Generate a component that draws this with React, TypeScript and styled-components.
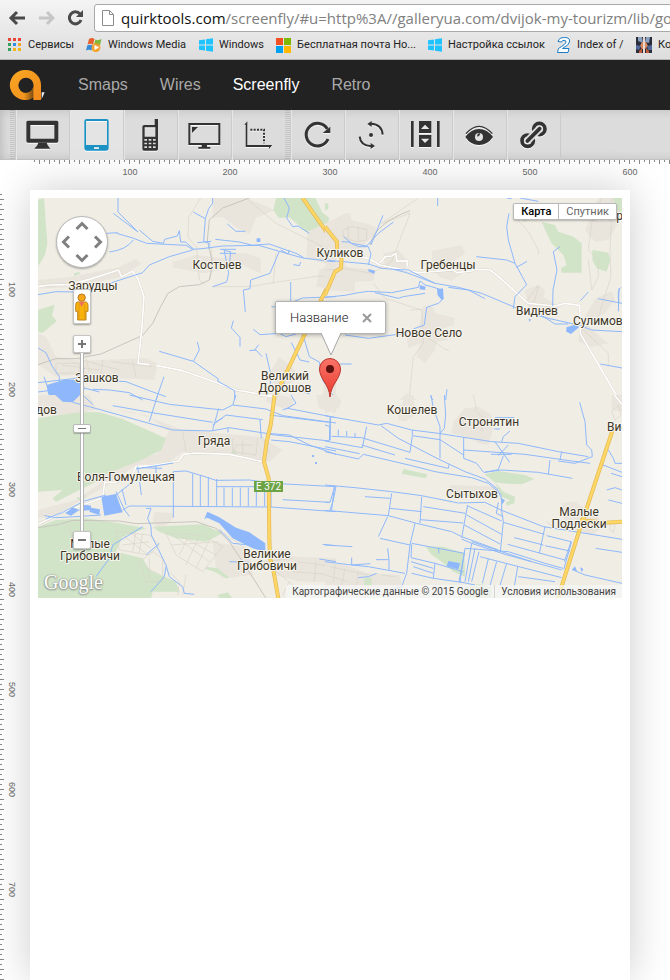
import React from "react";
import styled, { createGlobalStyle, css } from "styled-components";

const Global = createGlobalStyle`
  *, *::before, *::after { box-sizing: border-box; }
  html, body, #root { height: 100%; }
  body { margin: 0; background: #fff; overflow: hidden; font-family: "Liberation Sans", Arial, sans-serif; }
  button, input { font: inherit; margin: 0; padding: 0; border: 0; background: none; }
  ul { margin: 0; padding: 0; list-style: none; }
`;

const Shell = styled.div`
  display: flex;
  flex-direction: column;
  min-height: 100%;
  overflow: hidden;
`;

/* ---------- browser chrome ---------- */

const Chrome = styled.div`
  flex: none;
  height: 60px;
  background: linear-gradient(#f4f4f4, #dedede 56px);
  border-bottom: 1px solid #b4b4b4;
  overflow: hidden;
`;

const AddressRow = styled.div`
  display: flex;
  align-items: center;
  height: 35px;
  padding-left: 8px;
`;

const ChromeButton = styled.button<{ $w: number }>`
  display: block;
  flex: none;
  width: ${(p) => p.$w}px;
  height: 20px;
  svg { display: block; }
`;

const Omnibox = styled.div`
  flex: 1 0 auto;
  display: flex;
  align-items: center;
  height: 28px;
  padding-left: 7px;
  gap: 7px;
  background: #fff;
  border: 1px solid #a9a9a9;
  border-radius: 3px;
`;

const Url = styled.a`
  font: 15px/24px "Open Sans", "Noto Sans", sans-serif;
  color: #808080;
  text-decoration: none;
  white-space: nowrap;
  b { font-weight: 400; color: #111; }
`;

const Bookmarks = styled.nav`
  display: flex;
  align-items: center;
  height: 20px;
  padding-left: 8px;
  gap: 12px;
`;

const Bookmark = styled.a<{ $w: number }>`
  flex: none;
  display: flex;
  align-items: center;
  gap: 6px;
  min-width: ${(p) => p.$w}px;
  font: 11px/18px Roboto, sans-serif;
  color: #222;
  text-decoration: none;
  white-space: nowrap;
  svg { flex: none; }
`;

/* ---------- site navigation and tools ---------- */

const SiteNav = styled.nav`
  flex: none;
  display: flex;
  align-items: center;
  height: 50px;
  padding-left: 9px;
  background: #222;
`;

const NavLink = styled.a<{ $active?: boolean }>`
  margin-left: 32px;
  font-size: 16px;
  line-height: 20px;
  color: ${(p) => (p.$active ? "#fff" : "#a9a9a9")};
  text-decoration: none;
`;

const Toolbar = styled.div`
  flex: none;
  display: flex;
  height: 50px;
  padding-left: 10px;
  background: linear-gradient(#cfcfcf, #dcdcdc 9px, #dcdcdc 41px, #d0d0d0);
  box-shadow: inset 8px 0 8px -6px #bbb, inset 0 -1px 0 #c4c4c4;
`;

const Grip = styled.span`
  width: 5px;
  background: repeating-linear-gradient(rgba(0, 0, 0, 0.1) 0 1px, transparent 1px 2px);
`;

const Tool = styled.button<{ $active?: boolean }>`
  width: 54px;
  height: 50px;
  border-left: 1px solid #cbcbcb;
  box-shadow: inset 1px 0 0 #e6e6e6;
  color: ${(p) => (p.$active ? "#1c92c4" : "#333")};
  ${(p) => p.$active && css`background: #e4e4e4;`}
  svg {
    display: block;
    width: 54px;
    height: 50px;
    filter: drop-shadow(0 1px 0 rgba(255, 255, 255, 0.8));
  }
`;

const ToolEnd = styled.span`
  width: 1px;
  background: #cbcbcb;
`;

/* ---------- rulers and viewport ---------- */

const rulerText = css`
  font-size: 9px;
  line-height: 10px;
  color: #666;
`;

const TopRuler = styled.div`
  flex: none;
  position: relative;
  z-index: 1;
  height: 30px;
  margin-left: 30px;
  background:
    linear-gradient(90deg, transparent 9px, #888 9px) 0 0 / 10px 4px repeat-x,
    linear-gradient(90deg, transparent 4px, #888 4px, #888 5px, transparent 5px) 0 0 / 10px 2px repeat-x;
`;

const TopMarks = styled.ul`
  ${rulerText}
  display: flex;
  padding: 7px 0 0 50px;
  li { flex: 0 0 100px; text-align: center; }
`;

const Workspace = styled.div`
  flex: 1;
  display: flex;
  padding-right: 40px;
`;

const SideRuler = styled.div`
  position: relative;
  z-index: 1;
  flex: 0 0 30px;
  background:
    linear-gradient(transparent 9px, #888 9px) 0 0 / 4px 10px repeat-y,
    linear-gradient(transparent 4px, #888 4px, #888 5px, transparent 5px) 0 0 / 2px 10px repeat-y;
`;

const SideMarks = styled.ul`
  ${rulerText}
  display: flex;
  flex-direction: column;
  padding: 50px 0 0 7px;
  li { flex: 0 0 100px; width: 10px; writing-mode: vertical-rl; text-align: center; }
`;

const Device = styled.main`
  flex: 1;
  padding: 8px;
  background: #fff;
  box-shadow: 0 0 40px rgba(0, 0, 0, 0.2);
`;

/* ---------- map ---------- */

const MapBox = styled.section`
  position: relative;
  height: 400px;
  overflow: hidden;
  background: #f0ede5;
  font-family: Roboto, sans-serif;
`;

const MapArt = styled.svg`
  display: block;
  width: 100%;
  height: 100%;
`;

const MapLabel = styled.text`
  font: 12px Roboto, sans-serif;
  fill: #3c3526;
  stroke: #f7f5f0;
  stroke-width: 2px;
  stroke-linejoin: round;
  paint-order: stroke;
`;

const RoadBadge = styled.text`
  font: 10px Roboto, sans-serif;
  fill: #fff;
`;

const Controls = styled.div`
  position: absolute;
  left: 18px;
  top: 18px;
  width: 52px;
  display: flex;
  flex-direction: column;
  align-items: center;
`;

const PanPad = styled.div`
  display: grid;
  place-items: center;
  grid-template-columns: repeat(3, 16px);
  grid-template-rows: repeat(3, 16px);
  width: 52px;
  height: 52px;
  padding: 1px;
  border: 1px solid #bbb;
  border-radius: 50%;
  background: #fff;
  box-shadow: 0 1px 2px rgba(0, 0, 0, 0.3);
`;

const PanButton = styled.button<{ $col: number; $row: number; $turn: number }>`
  grid-column: ${(p) => p.$col};
  grid-row: ${(p) => p.$row};
  width: 14px;
  height: 14px;
  svg { display: block; transform: rotate(${(p) => p.$turn}deg); }
`;

const MapButton = styled.button<{ $h: number; $gap?: number }>`
  display: grid;
  place-items: center;
  width: 18px;
  height: ${(p) => p.$h}px;
  margin-top: ${(p) => p.$gap ?? 0}px;
  background: #fff;
  border: 1px solid #c4c4c4;
  border-radius: 2px;
  box-shadow: 0 1px 2px rgba(0, 0, 0, 0.35);
`;

const ZoomRange = styled.input`
  appearance: none;
  display: block;
  writing-mode: vertical-lr;
  direction: rtl;
  width: 18px;
  height: 178px;
  background: linear-gradient(#fff, #fff) center / 2px 100% no-repeat,
    linear-gradient(#b5b5b5, #b5b5b5) center / 4px 100% no-repeat;
  &::-webkit-slider-thumb {
    appearance: none;
    width: 18px;
    height: 9px;
    border: 1px solid #b8b8b8;
    border-radius: 2px;
    background: linear-gradient(#777, #777) center / 8px 1px no-repeat, #fff;
    box-shadow: 0 1px 1px rgba(0, 0, 0, 0.25);
  }
`;

const TypeSwitch = styled.div`
  position: absolute;
  top: 5px;
  right: 5px;
  display: flex;
  border: 1px solid #b9b9b9;
  border-radius: 2px;
  background: #fff;
  box-shadow: 0 1px 2px rgba(0, 0, 0, 0.25);
`;

const TypeButton = styled.button<{ $active?: boolean }>`
  padding: 0 7px;
  font: ${(p) => (p.$active ? 500 : 400)} 11px/15px Roboto, sans-serif;
  color: ${(p) => (p.$active ? "#000" : "#666")};
  & + & { border-left: 1px solid #b9b9b9; }
`;

const Bubble = styled.div`
  position: absolute;
  left: calc(50% - 55px);
  top: 103px;
  display: flex;
  align-items: center;
  justify-content: space-between;
  width: 111px;
  height: 33px;
  padding: 0 13px 0 14px;
  border: 1px solid #b3b3b3;
  border-radius: 2px;
  background: #fff;
  box-shadow: 0 1px 4px rgba(0, 0, 0, 0.3);
  font-size: 13px;
  font-weight: 300;
  color: #222;
`;

const CloseButton = styled.button`
  width: 10px;
  height: 10px;
  svg { display: block; }
`;

const Over = styled.svg<{ $top: number; $shift: number }>`
  position: absolute;
  left: calc(50% - ${(p) => p.$shift}px);
  top: ${(p) => p.$top}px;
`;

const Legal = styled.div`
  position: absolute;
  right: 0;
  bottom: 0;
  display: flex;
  height: 13px;
  background: rgba(245, 245, 245, 0.75);
  font-size: 10px;
  line-height: 13px;
  color: #444;
  white-space: nowrap;
  span, a { padding: 0 6px; }
  a { color: inherit; text-decoration: none; border-left: 1px solid #d5d5cc; }
`;

const Brand = styled.a`
  position: absolute;
  left: 6px;
  bottom: 3px;
  font: 20px/26px "Liberation Serif", serif;
  color: #fff;
  text-decoration: none;
  text-shadow: 0 0 2px #777, 0 1px 2px #888;
`;

/* ---------- map data: four tiles drawn at triple scale ---------- */

type Tile = {
  at: [number, number];
  urban: string;
  green: string;
  water: string;
  lanes: string;
  rail: string;
  roads: string;
  rivers: string;
  highway: string;
};

const tiles: Tile[] = [
  {
    at: [-2, -8],
    urban:
      "M532 24L640 24L640 28L716 60L660 84L640 132L600 112L560 80L530 84Z M410 216L480 195L560 205L586 190L630 190L674 205L674 250L620 225L560 240L500 250L410 232Z M6 270L100 262L250 232L300 206L316 222L250 262L120 290L6 296Z M814 120L900 100L900 300L840 290L850 240L880 225L812 205Z M6 430L30 440L60 500L130 512L330 505L365 520L355 570L250 565L110 555L60 560L6 525Z M730 500L800 560L740 590L690 570Z M870 520L900 530V630H860Z",
    green:
      "M6 30L24 24L34 160L28 192L6 230Z M6 360L56 344L48 376L62 394L20 428L6 426Z M720 24L838 24L858 66L880 84L876 98L812 126L760 82L728 84L712 60Z M114 250L130 246L132 252L114 258Z",
    water:
      "M32 585L90 568L140 572L146 598L120 630H58L36 612Z M662 145h11v11h-11z",
    lanes:
      "M60 520H130V550H60Z M78 525L190 540 M120 505L250 540 M225 515L350 530 M150 505L160 545 M200 510L195 555 M290 515L300 560 M494 24L458 82L456 142L482 172L490 270L506 282 M525 170L530 230L520 270 M635 28L720 100L800 140L870 175L900 190 M530 290L640 290L712 278L850 258L900 262 M720 190L712 280",
    rail:
      "M640 24L560 54L520 90L514 150L530 220L520 270L490 284L430 290L396 310L374 350L350 400L320 436L195 492L120 506L60 506L6 524",
    roads:
      "M6 290L40 285L100 284L160 268L248 240L256 260L290 244L306 268L324 320L318 410L306 520L340 524 M360 526L440 542L520 570L600 600L670 612L710 615",
    rivers:
      "M246 24V66L306 126L232 70 M212 130L245 128M242 130L290 144L332 160L450 166L470 178L498 176L560 168L668 166L730 184L800 204L900 216 M310 120L350 154L382 160L386 148L424 138L430 122L434 156L448 156L474 178 M472 66L508 86L518 56L530 40V24 M508 86L503 154L520 160L518 176 M484 158L526 154 M538 148L610 156L650 166L700 162L780 190L802 202 M220 186Q270 180 292 150 M190 290L320 248L340 225L400 200L470 180 M552 178H600 M552 190H600 M564 178L578 250L572 276L530 290 M566 182L584 185L580 230 M730 184L702 250L644 270L642 296L622 300L628 366 M772 224L790 227L794 216 M734 180L756 192L760 180 M744 24L760 54L752 84L770 110L786 108L820 130 M574 102L600 124L628 124 M6 314L60 305L120 306 M120 306L190 296L200 280 M764 276V334 M706 350L730 352L800 324L900 320 M592 392L586 414L612 442V470 M652 418L672 434L730 430L750 440L780 432 M640 482L660 480L678 500 M656 480L668 464 M6 474L30 488L48 528L70 560V590 M6 578L120 565L145 535 M24 560L48 630 M6 606L130 590L190 606 M170 598L220 600L280 608L320 630 M180 570L270 575L340 602L390 620 M370 484L472 514L546 566V574L596 602V630 M472 514L490 480L484 456 M384 560L360 630 M690 490L706 560L700 600 M800 430L820 500L850 516L860 570L900 630 M766 458L792 510L820 516 M740 572L760 606L790 600L820 612",
    highway: "M800 24L900 166 M900 240L855 330L712 630",
  },
  {
    at: [287, -8],
    urban:
      "M24 90L60 70H75L80 90L150 108L155 128L120 160L90 190L30 180L0 160V100Z M322 182L410 166L420 190L390 210L410 250L380 272L345 262L320 232Z M0 225L50 210L65 230L150 240L145 272L90 275L90 305L0 300Z M175 190L220 180L250 215L240 238L180 235Z M600 300L640 285L660 300L655 320L700 350L698 370L640 370L610 350Z M295 348L325 352L330 370L390 385L385 405L340 420L370 450L335 455L330 480L300 518L275 500L285 460L250 475L245 445L280 420Z M812 325L860 304L870 330L840 370L780 400L850 460L800 470L760 455L765 405Z M820 24H891V80L850 150L810 155L780 120Z M222 630L245 610L275 630Z M0 510L30 520L30 610H0Z",
    green:
      "M650 95L690 105L700 125L745 140L770 160V248L710 248L708 235L725 225L715 195L680 160L665 130Z M802 180L850 188L856 210L845 245L815 235L802 210Z M865 24L891 24V66L870 58Z M0 38L10 42V56L0 62Z M590 80L615 88L595 95Z",
    water:
      "M336 298L354 295L356 325L350 330L338 316Z M284 285L302 290L300 300L284 298Z M724 412L755 403L762 412L738 432L724 425Z M130 237L150 242L148 252L130 244Z M611 386L618 388L614 397Z",
    lanes:
      "M53 120L80 110L125 118V150L90 155L55 140Z M70 108V145M100 110V150 M0 240L60 236L140 250L200 215L255 70L170 100L280 24 M255 360L290 358L295 460L265 500L252 630 M145 280L180 325L290 360 M290 430L360 478L372 480 M570 80L610 125L640 180V195 M640 285L600 340M640 290L625 345 M790 210L800 300L820 260V210L790 180L800 100L830 24 M860 24V90L855 180L858 260L820 380L775 420L850 490V530",
    rail: "M255 62Q150 100 135 165",
    roads:
      "M55 190L130 205L165 225L215 235L280 248L385 240L395 248L440 243L450 238L494 240L510 250L610 340L690 348L720 340L764 346L766 430L780 455L830 540L882 630 M165 220L180 200L200 198L212 190L216 214L246 212L247 230",
    rivers:
      "M50 155L70 156L100 170H130L138 192L130 225 M56 140L80 160L125 168L160 130L184 112L206 96 M138 165L174 76 M0 210L130 222L170 235L205 238L245 248L330 280L400 292L470 310L570 352L590 364L670 385L760 405L800 420L891 425 M205 238L250 240L330 280 M0 322L60 316L100 308L130 304L200 308L280 292L285 273L300 285L320 290L345 298 M150 308L220 325L235 320L300 310 M356 325L340 340L305 352L298 405L270 415L240 430L130 445L60 435 M454 200L545 210L570 220L605 284L570 320L565 356 M545 24L560 26M570 220L550 150L545 110L552 70 M575 232L606 214 M338 24V48 M370 292L430 300L480 326 M705 170L685 185L696 240L684 300L683 348 M640 370L690 402H730 M766 332L790 306 M820 326L891 340M880 364L882 295 M882 340Q875 300 888 292 M826 522L891 534 M45 522H80 M316 618L324 630 M362 630L366 598 M585 24L640 34",
    highway: "M0 110L36 155V190L50 195L48 235L30 245L0 315",
  },
  {
    at: [-2, 197],
    urban:
      "M6 0H160L180 40L290 50L400 90L440 105L670 125L740 165L700 200L620 190L590 175L440 170L400 200L300 210L215 270L60 360L6 370V345L120 315L200 260L210 230L310 190L370 175L330 165L330 130L385 130L400 110L330 60L200 40L60 70L6 40Z M355 350L410 355V370L380 405L350 385Z M695 0H730L770 10V35L740 40L690 20Z M840 0H900V55L850 40Z M530 440L640 460L650 540L560 550L540 520Z M700 470L770 485L900 490V560L790 560L720 540Z",
    green:
      "M6 70L130 52L190 52L260 72L390 130L376 165L310 198L215 235L180 260L60 320L50 310L80 285L6 290Z M200 208L250 215L210 230Z M6 395L60 375L150 370L250 385L330 400L260 425L240 470L320 490L340 525L420 560L430 590L350 590L345 610H6Z M350 395L500 388L560 415L510 440L420 430L370 410Z M120 310L150 300L140 320Z M590 165L605 172L600 178L585 174Z M510 515L545 520L580 548L570 550L535 530L510 522Z M545 600L575 592L590 610H550Z",
    water:
      "M58 0H132L110 22L80 20Z M196 305L240 297L260 352L205 362Z M88 355L110 337L130 345L105 362Z M135 328L165 332L165 345L130 348Z M165 338L192 343L190 360L160 350Z M514 350L550 367L600 398L640 412L688 445V470L650 460L590 430L550 385L514 368L505 372Z M828 180h6v6h-6z M837 201h6v6h-6z",
    lanes:
      "M440 110L450 170 M590 130V170L660 180L665 130 M620 140V180 M680 125L700 175 M590 180L600 150H650 M80 375L100 400L110 440L80 470 M240 410L340 420L370 450L340 480L250 465Z M260 420L330 475 M280 412L345 460 M300 412L290 470 M320 415L310 472 M260 450L340 440 M390 415L500 420L560 455L500 530L420 480Z M410 420L520 500 M430 420L540 480 M460 420L430 480 M490 422L450 510 M520 435L480 520 M405 450L550 440 M310 500L350 470L380 490L380 560L330 560Z M320 510L370 540 M340 490V555 M780 500L900 515 M770 530L900 540 M840 500L835 560 M870 505V590 M720 530L760 560L740 600 M760 560L790 590L785 610 M400 530L430 560L425 600 M450 540L440 600 M540 400L600 440L680 500L770 490",
    rail: "M6 398L70 388L110 376L250 378L300 386L480 380L540 400L580 440L620 500L690 610",
    roads:
      "M6 388L80 352L200 308L206 262L240 262L290 238L300 214L350 212L428 198L442 178L480 174L580 178L680 200 M670 0L710 5L690 0",
    rivers:
      "M110 22L160 35L250 60L410 105L525 108L580 98L690 115L760 120L820 150L900 178 M230 32L360 55L530 82 M340 80L365 0 M280 0L400 28L560 45L590 30L600 0 M590 30L690 42L740 62L900 84 M530 105L548 40 M530 90L570 60L680 74 M540 80L560 70M700 60L880 82 M740 44L755 40L900 68 M884 65L880 138L700 118 M576 98V112 M672 75L676 130 M765 0L780 25L750 42 M705 135L760 140L900 168 M300 222L412 204 M305 214L316 300 M318 218L378 220 M360 212V235 M412 368V230L450 228L510 246L540 256L640 255L690 262 M470 236V333 M493 240V333 M517 246V333 M542 252V333 M564 278V333 M589 278V333 M613 278V333 M637 278V333 M661 278V333 M686 278V333 M542 275H690 M260 345L280 333L705 336L900 350 M705 280V336 M710 265L900 275 M740 314L882 322L896 275 M240 290L266 345L280 364 M258 282L270 330 M240 300L310 245 M330 340L345 340L335 370L345 395L346 420L390 510L400 545L440 575L445 595L475 598 M320 395L230 450L220 490L180 545 M390 515L385 545L345 590 M370 445L330 480 M25 362L60 368L120 365L195 360 M30 372L80 352L145 318L210 300 M550 404L590 445L640 450 M860 448L900 452 M850 492L900 500 M580 500L640 502M140 0L170 28",
    highway: "M716 0L704 90L692 140L684 200L698 250L700 430L702 490L712 525L727 610",
  },
  {
    at: [287, 197],
    urban:
      "M0 0H35L50 20L40 40L0 55Z M225 45L240 0H265L270 60L240 80L220 75Z M385 80L420 40L460 35L500 60L505 100L490 150L460 145L440 130L380 115Z M375 270L520 275V310L375 300Z M710 325L750 320L830 375V400L800 420L740 400L720 380Z M860 0H891V50L860 45Z M0 500L60 510L130 535L225 540L230 575L0 575Z",
    green:
      "M478 238L520 228L600 240L628 252L590 268L530 265L510 262Z M510 262L535 290L570 305L568 325L545 332L542 322L556 316L530 305Z M235 222L307 238L302 250L230 236Z M302 455L355 455L418 475L420 545L385 530L350 500L320 480Z M118 550L140 548V575L118 572Z M420 575Q460 560 500 575V610H420Z",
    water:
      "M370 498L405 505L400 523L365 514Z M526 308L540 316L532 328Z M740 525L750 514L756 528Z M765 516L775 522L770 532Z",
    lanes:
      "M15 515L130 540 M0 540L70 560 M30 510L25 560 M60 520L50 570 M100 530L95 570 M170 540L210 545 M860 50L880 30L888 60L870 75Z M850 380L870 390L865 412L855 405L856 385 M450 45L475 70L470 110 M665 380L690 400 M445 0L455 45",
    rail: "",
    roads: "M868 0L891 28",
    rivers:
      "M0 62L160 90L185 85L260 105L340 115L500 140L580 145L700 170L790 185 M0 90L15 95V135 M15 68V135 M20 124L110 128L255 172L262 122L345 134 M40 104V122 M65 108V124 M90 114V128 M125 95L112 158L0 138 M110 150L210 180 M0 155L104 176 M0 170L100 192L115 178L260 212L330 230L440 248L490 265L530 300 M240 190L370 220L372 208 M168 92L220 130L340 192L420 230L480 252L515 280L530 310V348L535 380L526 470 M345 190V95L325 40L318 0 M345 115L358 100L362 60L358 0 M416 127V190L455 205L476 232 M416 165L600 178L740 198L795 205 M345 134L416 180M530 140L535 125L555 108 M508 102H525 M510 140L554 202 M550 150L520 182 M498 178L560 178 M535 182L520 224L478 232 M478 232L530 225L640 232L742 250 M675 195L670 238 M764 22L780 80L785 150L800 165L802 185L750 205L700 198 M710 170L705 195 M262 105L262 120 M510 68H568 M0 270L90 278L200 290L290 302L400 324L480 322L530 346L655 395L738 408L891 433 M28 275L20 345 M33 275L24 320L15 345 M0 322H15 M0 346L190 362L200 295 M195 340L290 350 M120 305L195 310 M290 305L285 385 M295 335L422 355 M188 365L160 425 M190 362L275 385L380 410L410 425L520 465 M285 374L415 384 M428 330L410 428 M428 333L530 378 M425 360L530 418 M418 390L525 447 M535 382L658 418 M520 322L514 355L535 365 M660 395L643 475 M568 428L655 450 M548 448L720 495 M665 422L738 440 M660 452L735 468 M740 440L716 524 M738 440L718 500 M270 385L255 450L245 535 M165 430L255 450 M260 445L418 475 M260 448L258 488L330 505L325 550L260 535 M258 500L325 520 M265 515L325 535 M330 505L415 530 M340 460L342 475 M418 475L402 560L450 570 M420 460L405 560 M440 445L420 560 M450 460L430 560 M462 470L440 560 M420 460L550 470L660 505L714 520 M440 440L530 470L620 500 M410 432L440 445L540 478L710 525 M465 485L710 548 M490 492L472 565 M515 500L495 572 M545 505L525 572 M578 515L568 575 M580 545L690 560 M0 500L80 510L130 515L240 535 M80 488V510L136 506 M188 460L192 495V525 M153 494H190 M100 548L130 545L155 535 M325 550L410 562 M245 535L230 575L210 580 M0 450L82 455 M834 210L891 232 M850 165L865 190L870 205H891 M858 235L891 245 M850 315L891 325 M845 285L870 278L891 285 M812 460L891 472 M745 525L780 540L891 565",
    highway: "M868 90L765 400L705 590L700 610 M765 375L840 383L891 380",
  },
];

type Label = { x: number; y: number; text: string; start?: boolean };
const labels: Label[] = [
  { x: 179, y: 71, text: "Костыев" },
  { x: 302, y: 59, text: "Куликов" },
  { x: 410, y: 71, text: "Гребенцы" },
  { x: 499, y: 117, text: "Виднев" },
  { x: 535, y: 127, text: "Сулимов", start: true },
  { x: 391, y: 139, text: "Новое Село" },
  { x: 558, y: 22, text: "Звертов", start: true },
  { x: 55, y: 92, text: "Зарудцы" },
  { x: 59, y: 184, text: "Зашков" },
  { x: 247, y: 182, text: "Великий" },
  { x: 247, y: 194, text: "Дорошов" },
  { x: 374, y: 216, text: "Кошелев" },
  { x: 451, y: 228, text: "Стронятин" },
  { x: 569, y: 233, text: "Вислобоки", start: true },
  { x: -2, y: 216, text: "дов", start: true },
  { x: 176, y: 247, text: "Гряда" },
  { x: 88, y: 283, text: "Воля-Гомулецкая" },
  { x: 434, y: 300, text: "Сытыхов" },
  { x: 541, y: 318, text: "Малые" },
  { x: 541, y: 330, text: "Подлески" },
  { x: 52, y: 350, text: "Малые" },
  { x: 52, y: 362, text: "Грибовичи" },
  { x: 229, y: 360, text: "Великие" },
  { x: 229, y: 372, text: "Грибовичи" },
];

const Terrain = () => (
  <MapArt viewBox="0 0 584 400" preserveAspectRatio="xMidYMid slice" aria-label="Карта">
    {tiles.map((t, i) => (
      <g key={i} transform={`translate(${t.at[0]} ${t.at[1]}) scale(0.33333)`} fill="none" strokeLinejoin="round">
        <path d={t.urban} fill="#e9e4dc" />
        <path d={t.green} fill="#d1e4c8" />
        <path d={t.lanes} stroke="#dad5c9" strokeWidth="2" />
        <path d={t.rail} stroke="#c8c5be" strokeWidth="3" />
        <path d={t.roads} stroke="#d6d0c4" strokeWidth="7" />
        <path d={t.roads} stroke="#fff" strokeWidth="5" />
        <path d={t.water} fill="#8eb8fb" />
        <path d={t.rivers} stroke="#8eb8fb" strokeWidth="3" />
        <path d={t.highway} stroke="#e2b95a" strokeWidth="12" />
        <path d={t.highway} stroke="#fdd663" strokeWidth="8" />
      </g>
    ))}
    <rect x="216" y="283" width="29" height="11" fill="#6ba345" />
    <RoadBadge x="230.5" y="292" textAnchor="middle">E 372</RoadBadge>
    {labels.map((l, i) => (
      <MapLabel key={i} x={l.x} y={l.y} textAnchor={l.start ? "start" : "middle"}>{l.text}</MapLabel>
    ))}
  </MapArt>
);

/* ---------- icons ---------- */

const WindowsFlag = () => (
  <svg width="14" height="14" viewBox="0 0 14 14" fill="#1fc3ff">
    <path d="M0 2.2L6 1.4V6.5H0ZM7 1.2L14 .3V6.5H7ZM0 7.5H6V12.6L0 11.8ZM7 7.5H14V13.8L7 12.8Z" />
  </svg>
);

const AppsIcon = () => (
  <svg width="14" height="14" viewBox="0 0 14 14">
    {["#ea4335", "#ea4335", "#ea4335", "#34a060", "#2f8ee8", "#f5a623", "#34a060", "#f2b619", "#f2b619"].map((c, i) => (
      <rect key={i} x={(i % 3) * 5} y={Math.floor(i / 3) * 5} width="3" height="3" fill={c} />
    ))}
  </svg>
);

const MediaIcon = () => (
  <svg width="16" height="16" viewBox="0 0 16 16">
    <path d="M3 2Q6 0 8.500 2L7 7.500Q4 6 1.500 7.500Z" fill="#e8612c" />
    <path d="M9.500 2.500Q12 4 15.500 2L14 8Q11 9 8 7.500Z" fill="#7db83a" />
    <path d="M1.200 8.500Q4 7 6.800 8.500L5.500 13.500Q3 12 0 13.500Z" fill="#3a8ad8" />
    <path d="M7.500 8.500Q10 10 13.500 9L12 14.500Q9 15.500 6 13.500Z" fill="#f6c12c" />
    <circle cx="10" cy="10.500" r="4.500" fill="#f59a23" opacity=".8" />
    <path d="M8.500 8L13 10.500L8.500 13Z" fill="#fff" />
  </svg>
);

const MsIcon = () => (
  <svg width="15" height="15" viewBox="0 0 15 15">
    <path d="M0 0H7V7H0Z" fill="#f35022" />
    <path d="M8 0H15V7H8Z" fill="#7eb900" />
    <path d="M0 8H7V15H0Z" fill="#01a3ee" />
    <path d="M8 8H15V15H8Z" fill="#ffb900" />
  </svg>
);

const TwoIcon = () => (
  <svg width="14" height="16" viewBox="0 0 14 16" fill="#fff" stroke="#1c7cc8">
    <path d="M1 4.500Q2 .5 7.500 .5Q13.500 .5 12.500 5Q12 8 5.500 11.500H12L11 15.500H.5L1.500 11.500Q9 7 9 5Q9 3.300 7 3.300Q5.300 3.300 4.500 5Z" />
  </svg>
);

const PhotoIcon = () => (
  <svg width="16" height="16" viewBox="0 0 16 16">
    <path d="M0 0H16V16H0Z" fill="#2b2d3a" />
    <path d="M2 0H6L7 6L2 4ZM10 0H14L13 6L9 5Z" fill="#8ba0c0" />
    <path d="M6 5H10L12 9L9 12H6L4 9Z" fill="#d98a5f" />
    <path d="M7 0H9V16H7Z" fill="#e8d5cc" />
    <path d="M0 8L5 9L3 13L0 12ZM11 9L16 8V13L12 13Z" fill="#53699a" />
    <path d="M3 14L6 11V16H3ZM10 11L13 14V16H10Z" fill="#c25b3a" />
  </svg>
);

const bookmarks = [
  { text: "Сервисы", w: 65, icon: <AppsIcon /> },
  { text: "Windows Media", w: 101, icon: <MediaIcon /> },
  { text: "Windows", w: 65, icon: <WindowsFlag /> },
  { text: "Бесплатная почта Но...", w: 139, icon: <MsIcon /> },
  { text: "Настройка ссылок", w: 114, icon: <WindowsFlag /> },
  { text: "Index of /", w: 67, icon: <TwoIcon /> },
  { text: "Контакты", w: 66, icon: <PhotoIcon /> },
];

const Logo = () => (
  <svg width="37" height="32" viewBox="24 33 111 96">
    <defs>
      <linearGradient id="ring" x1="0" y1="0" x2="1" y2="1">
        <stop offset="0" stopColor="#f7a823" />
        <stop offset="1" stopColor="#f28a1d" />
      </linearGradient>
      <linearGradient id="fold" x1="0" x2="1">
        <stop offset="0" stopColor="#f39a1e" />
        <stop offset="1" stopColor="#7c4a10" />
      </linearGradient>
    </defs>
    <path d="M75 36A45 45 0 0 1 120 81V126H97V118A45 45 0 1 1 75 36ZM75 59A23 23 0 1 0 75 105A23 23 0 1 0 75 59Z" fill="url(#ring)" fillRule="evenodd" />
    <path d="M68 105Q90 108 97 86V118Q84 128 68 125Z" fill="url(#fold)" />
    <path d="M122 103H131L122 123Z" fill="#f1f1f1" />
  </svg>
);

const deviceTools = [
  {
    name: "Desktop",
    art: (
      <svg viewBox="48 156 162 150" fill="currentColor">
        <path fillRule="evenodd" d="M84 188H170Q175 188 175 193V249Q175 254 170 254H84Q79 254 79 249V193Q79 188 84 188ZM91 201V242H163V201Z" />
        <path d="M115 254H140L143 262L151 272H103L112 262Z" />
      </svg>
    ),
  },
  {
    name: "Tablet",
    active: true,
    art: (
      <svg viewBox="210 156 162 150" fill="currentColor">
        <path fillRule="evenodd" d="M260 183H319Q326 183 326 190V271Q326 278 319 278H260Q253 278 253 271V190Q253 183 260 183ZM258 189V261H321V189ZM282 268V273H297V268Z" />
      </svg>
    ),
  },
  {
    name: "Mobile",
    art: (
      <svg viewBox="372 156 162 150" fill="currentColor">
        <path fillRule="evenodd" d="M464 183H474V273Q474 278 469 278H432Q427 278 427 273V207Q427 201 433 201H464ZM434 208V236H466V208Z" />
        <path d="M433 243h8v5h-8zM446 243h8v5h-8zM459 243h8v5h-8zM433 254h8v5h-8zM446 254h8v5h-8zM459 254h8v5h-8zM433 265h8v5h-8zM446 265h8v5h-8zM459 265h8v5h-8z" fill="#dcdcdc" />
      </svg>
    ),
  },
  {
    name: "Television",
    art: (
      <svg viewBox="534 156 162 150" fill="currentColor">
        <path fillRule="evenodd" d="M565 195H661V261H565ZM571 201V255H655V201Z" />
        <path d="M576 207H594L576 225ZM605 261H621V267H631V272H595V267H605Z" />
      </svg>
    ),
  },
  {
    name: "Custom Size",
    art: (
      <svg viewBox="696 156 162 150" fill="currentColor">
        <path d="M733 200L742 190V261H804V261H817L807 273V267H737V200Z" />
        <path d="M751 215H792V256" fill="none" stroke="currentColor" strokeWidth="6" strokeDasharray="6 4" />
      </svg>
    ),
  },
];

const viewTools = [
  {
    name: "Refresh",
    art: (
      <svg viewBox="3 15 162 150">
        <path d="M112 72A34 34 0 1 0 114 102" fill="none" stroke="currentColor" strokeWidth="9" />
        <path d="M121 65V84H98Z" fill="currentColor" />
      </svg>
    ),
  },
  {
    name: "Rotate",
    art: (
      <svg viewBox="165 15 162 150">
        <path d="M243 56Q276 58 278 89M209 95Q211 122 244 124" fill="none" stroke="currentColor" strokeWidth="6" />
        <circle cx="243" cy="90" r="6" fill="currentColor" />
        <path d="M232 57L245 48V66ZM255 123L242 114V132Z" fill="currentColor" />
      </svg>
    ),
  },
  {
    name: "Allow Scrolling",
    art: (
      <svg viewBox="327 15 162 150" fill="currentColor">
        <path d="M363 48H371V126H363ZM441 48H449V126H441ZM387 48H424V84H387ZM387 90H424V126H387Z" />
        <path d="M393 72L405 59L418 72ZM393 101H418L405 114Z" fill="#e8e8e8" />
      </svg>
    ),
  },
  {
    name: "Use Proxy Server",
    art: (
      <svg viewBox="489 15 162 150" fill="currentColor">
        <path d="M526 96Q544 72 567 72Q592 72 609 96Q592 120 567 120Q542 120 526 96Z" />
        <path d="M528 86Q567 42 607 86" fill="none" stroke="currentColor" strokeWidth="4" />
        <circle cx="567" cy="96" r="12" fill="#e2e2e2" />
        <path d="M567 84A12 12 0 0 0 561 94Q567 96 571 86Z" />
      </svg>
    ),
  },
  {
    name: "Share",
    art: (
      <svg viewBox="651 15 162 150" fill="none" stroke="currentColor" strokeLinecap="round">
        <circle cx="748" cy="72" r="17" strokeWidth="11" />
        <circle cx="713" cy="107" r="17" strokeWidth="11" />
        <path d="M716 104L746 74" stroke="#dcdcdc" strokeWidth="22" />
        <path d="M712 108L749 71" strokeWidth="11" />
      </svg>
    ),
  },
];

const Chevron = () => (
  <svg width="14" height="14" viewBox="0 0 14 14" fill="none" stroke="#808080" strokeWidth="3">
    <path d="M1.500 10L7 4.500L12.500 10" />
  </svg>
);

const Pegman = () => (
  <svg width="14" height="28" viewBox="118 307 42 84">
    <path d="M124 334H152Q157 336 157 344V362H151V388H126V362H120V344Q120 336 124 334Z" fill="#f7b20c" stroke="#c08325" strokeWidth="3" />
    <path d="M130 340V384M147 340V384" stroke="#d9931a" strokeWidth="2" />
    <circle cx="138" cy="321" r="11" fill="#f5a81b" stroke="#b5751f" strokeWidth="3" />
    <path d="M130 334H147L138 349Z" fill="#f0705a" />
  </svg>
);

export default function App() {
  return (
    <Shell>
      <Global />
      <Chrome>
        <AddressRow>
          <ChromeButton $w={29} aria-label="Back">
            <svg width="18" height="20" viewBox="0 0 18 20" fill="none" stroke="#4a4a4a" strokeWidth="3">
              <path d="M17 10H4M9 4L3 10L9 16" />
            </svg>
          </ChromeButton>
          <ChromeButton $w={29} aria-label="Forward">
            <svg width="18" height="20" viewBox="0 0 18 20" fill="none" stroke="#c6c6c6" strokeWidth="3">
              <path d="M2 10H15M10 4L16 10L10 16" />
            </svg>
          </ChromeButton>
          <ChromeButton $w={28} aria-label="Reload">
            <svg width="18" height="20" viewBox="0 0 18 20">
              <path d="M14 6A6 6 0 1 0 15 12" fill="none" stroke="#4a4a4a" strokeWidth="3" />
              <path d="M17 2V9H10Z" fill="#4a4a4a" />
            </svg>
          </ChromeButton>
          <Omnibox>
            <svg width="12" height="16" viewBox="0 0 12 16" fill="#fff" stroke="#8c8c8c">
              <path d="M.5 .5H7.500L11.500 4.500V15.500H.5ZM7.500 .5V4.500H11.500" />
            </svg>
            <Url href="#"><b>quirktools.com</b>/screenfly/#u=http%3A//galleryua.com/dvijok-my-tourizm/lib/google</Url>
          </Omnibox>
        </AddressRow>
        <Bookmarks>
          {bookmarks.map((b, i) => (
            <Bookmark key={i} href="#" $w={b.w}>{b.icon}{b.text}</Bookmark>
          ))}
        </Bookmarks>
      </Chrome>

      <SiteNav>
        <Logo />
        <NavLink href="#">Smaps</NavLink>
        <NavLink href="#">Wires</NavLink>
        <NavLink href="#" $active>Screenfly</NavLink>
        <NavLink href="#">Retro</NavLink>
      </SiteNav>

      <Toolbar>
        <Grip />
        {deviceTools.map((t) => (
          <Tool key={t.name} $active={t.active} aria-label={t.name}>{t.art}</Tool>
        ))}
        <Grip />
        {viewTools.map((t) => (
          <Tool key={t.name} aria-label={t.name}>{t.art}</Tool>
        ))}
        <ToolEnd />
      </Toolbar>

      <TopRuler>
        <TopMarks>
          {[100, 200, 300, 400, 500, 600].map((n) => <li key={n}>{n}</li>)}
        </TopMarks>
      </TopRuler>

      <Workspace>
        <SideRuler>
          <SideMarks>
            {[100, 200, 300, 400, 500, 600, 700].map((n) => <li key={n}>{n}</li>)}
          </SideMarks>
        </SideRuler>
        <Device>
          <MapBox>
            <Terrain />
            <Controls>
              <PanPad>
                <PanButton $col={2} $row={1} $turn={0} aria-label="Вверх"><Chevron /></PanButton>
                <PanButton $col={1} $row={2} $turn={-90} aria-label="Влево"><Chevron /></PanButton>
                <PanButton $col={3} $row={2} $turn={90} aria-label="Вправо"><Chevron /></PanButton>
                <PanButton $col={2} $row={3} $turn={180} aria-label="Вниз"><Chevron /></PanButton>
              </PanPad>
              <MapButton $h={35} $gap={21} aria-label="Просмотр улиц"><Pegman /></MapButton>
              <MapButton $h={18} $gap={11} aria-label="Увеличить">
                <svg width="8" height="8" viewBox="0 0 8 8" stroke="#777" strokeWidth="2"><path d="M0 4H8M4 0V8" /></svg>
              </MapButton>
              <ZoomRange type="range" min={0} max={100} defaultValue={58} aria-label="Масштаб" />
              <MapButton $h={18} aria-label="Уменьшить">
                <svg width="8" height="8" viewBox="0 0 8 8" stroke="#777" strokeWidth="2"><path d="M0 4H8" /></svg>
              </MapButton>
            </Controls>
            <TypeSwitch>
              <TypeButton $active>Карта</TypeButton>
              <TypeButton>Спутник</TypeButton>
            </TypeSwitch>
            <Bubble>
              Название
              <CloseButton aria-label="Закрыть">
                <svg width="10" height="10" viewBox="0 0 10 10" stroke="#999" strokeWidth="2"><path d="M1 1L9 9M9 1L1 9" /></svg>
              </CloseButton>
            </Bubble>
            <Over $top={134} $shift={10} width="24" height="26" viewBox="0 0 24 26">
              <path d="M1 0L11 23L21 0Z" fill="#fff" />
              <path d="M1 1L11 23L21 1" fill="none" stroke="#a8a8a8" />
            </Over>
            <Over $top={159} $shift={12} width="24" height="42" viewBox="0 0 24 42">
              <defs>
                <linearGradient id="pin" x2="0" y2="1">
                  <stop offset="0" stopColor="#fb7468" />
                  <stop offset="1" stopColor="#e83b2f" />
                </linearGradient>
              </defs>
              <path d="M12 40C11 27 1.500 22 1.500 12A10.500 10.500 0 0 1 22.500 12C22.500 22 13 27 12 40Z" fill="url(#pin)" stroke="#b8352c" />
              <circle cx="12" cy="12" r="4" fill="#5c120e" />
            </Over>
            <Brand href="#">Google</Brand>
            <Legal>
              <span>Картографические данные © 2015 Google</span>
              <a href="#">Условия использования</a>
            </Legal>
          </MapBox>
        </Device>
      </Workspace>
    </Shell>
  );
}
